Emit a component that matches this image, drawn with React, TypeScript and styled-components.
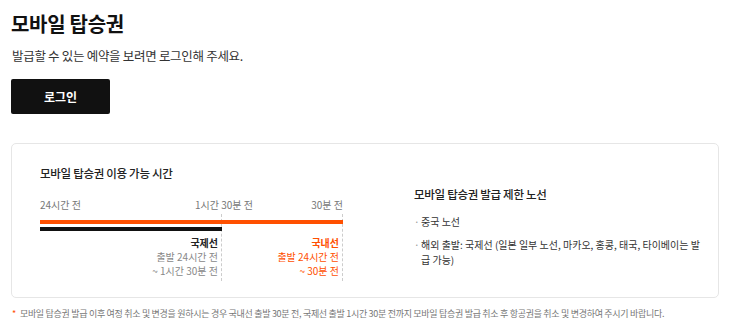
import React from 'react';
import styled, { createGlobalStyle } from 'styled-components';

const GlobalStyle = createGlobalStyle`
  body {
    margin: 0;
    background: #fff;
    font-family: "Noto Sans CJK KR", "Noto Sans", sans-serif;
    color: #111;
  }
`;

const Page = styled.div`
  padding: 10px 24px 0 11px;
`;

const Title = styled.h1`
  margin: 0;
  font-size: 20px;
  font-weight: 700;
  line-height: 28px;
  letter-spacing: -0.3px;
`;

const Sub = styled.p`
  margin: 9px 0 0 1px;
  font-size: 12.5px;
  line-height: 18px;
  color: #333;
  letter-spacing: -0.3px;
`;

const LoginButton = styled.button`
  display: block;
  margin-top: 14px;
  width: 99px;
  height: 35px;
  border: none;
  border-radius: 2px;
  background: #111;
  color: #fff;
  font-family: inherit;
  font-size: 12px;
  font-weight: 700;
`;

const Card = styled.section`
  margin-top: 29px;
  height: 155px;
  box-sizing: border-box;
  border: 1px solid #e6e6e6;
  border-radius: 5px;
  display: flex;
  padding: 0 0 0 28px;
`;

const TimeBlock = styled.div`
  width: 303px;
  padding-top: 21px;
`;

const SectionTitle = styled.h2`
  margin: 0;
  font-size: 11.5px;
  font-weight: 500;
  line-height: 16px;
  color: #222;
  letter-spacing: -0.3px;
`;

const LabelRow = styled.div`
  margin-top: 17px;
  display: grid;
  grid-template-columns: 182px 121px;
  font-size: 10px;
  line-height: 14px;
  color: #777;
  white-space: nowrap;
`;

const LabelEnds = styled.div`
  display: flex;
  justify-content: space-between;
`;

const MidLabel = styled.span`
  margin-left: -27px;
`;

const Track = styled.div`
  margin-top: 2px;
  display: grid;
  grid-template-columns: 182px 121px;
  grid-template-rows: auto auto 1fr;
`;

const Column = styled.div<{ $col: number }>`
  grid-column: ${p => p.$col};
  grid-row: 1 / 4;
  border-right: 1px dashed #ccc;
`;

const Bar = styled.div<{ $color: string; $span: string; $row: number; $gap: number }>`
  grid-column: ${p => p.$span};
  grid-row: ${p => p.$row};
  margin-top: ${p => p.$gap}px;
  height: 4px;
  background: ${p => p.$color};
`;

const Zone = styled.div<{ $col: number; $color: string }>`
  grid-column: ${p => p.$col};
  grid-row: 3;
  padding: 5px 4px 3px 0;
  text-align: right;
  font-size: 10px;
  line-height: 14px;
  color: ${p => p.$color};
  white-space: nowrap;
`;

const ZoneName = styled.div<{ $color: string }>`
  font-weight: 700;
  color: ${p => p.$color};
`;

const RouteBlock = styled.div`
  margin-left: 71px;
  padding-top: 42px;
  width: 290px;
`;

const RouteList = styled.ul`
  list-style: none;
  margin: 12px 0 0;
  padding: 0;
  display: flex;
  flex-direction: column;
  gap: 8px;
`;

const RouteItem = styled.li`
  position: relative;
  padding-left: 7px;
  font-size: 10px;
  line-height: 15px;
  color: #333;
  &::before {
    content: '·';
    position: absolute;
    left: 0;
    color: #999;
  }
`;

const Note = styled.p`
  margin: 9px 0 0 1px;
  font-size: 9px;
  line-height: 14px;
  color: #777;
  letter-spacing: -0.3px;
  white-space: nowrap;
  &::before {
    content: '*';
    color: #ff5000;
    margin-right: 4px;
  }
`;

const App: React.FC = () => {
  return (
    <Page>
      <GlobalStyle />
      <Title>모바일 탑승권</Title>
      <Sub>발급할 수 있는 예약을 보려면 로그인해 주세요.</Sub>
      <LoginButton>로그인</LoginButton>
      <Card>
        <TimeBlock>
          <SectionTitle>모바일 탑승권 이용 가능 시간</SectionTitle>
          <LabelRow>
            <span>24시간 전</span>
            <LabelEnds>
              <MidLabel>1시간 30분 전</MidLabel>
              <span>30분 전</span>
            </LabelEnds>
          </LabelRow>
          <Track>
            <Column $col={1} />
            <Column $col={2} />
            <Bar $color="#ff5000" $span="1 / 3" $row={1} $gap={6} />
            <Bar $color="#111" $span="1" $row={2} $gap={3} />
            <Zone $col={1} $color="#888">
              <ZoneName $color="#222">국제선</ZoneName>
              <div>출발 24시간 전</div>
              <div>~ 1시간 30분 전</div>
            </Zone>
            <Zone $col={2} $color="#ff5000">
              <ZoneName $color="#ff5000">국내선</ZoneName>
              <div>출발 24시간 전</div>
              <div>~ 30분 전</div>
            </Zone>
          </Track>
        </TimeBlock>
        <RouteBlock>
          <SectionTitle>모바일 탑승권 발급 제한 노선</SectionTitle>
          <RouteList>
            <RouteItem>중국 노선</RouteItem>
            <RouteItem>해외 출발: 국제선 (일본 일부 노선, 마카오, 홍콩, 태국, 타이베이는 발급 가능)</RouteItem>
          </RouteList>
        </RouteBlock>
      </Card>
      <Note>모바일 탑승권 발급 이후 여정 취소 및 변경을 원하시는 경우 국내선 출발 30분 전, 국제선 출발 1시간 30분 전까지 모바일 탑승권 발급 취소 후 항공권을 취소 및 변경하여 주시기 바랍니다.</Note>
    </Page>
  );
};

export default App;
